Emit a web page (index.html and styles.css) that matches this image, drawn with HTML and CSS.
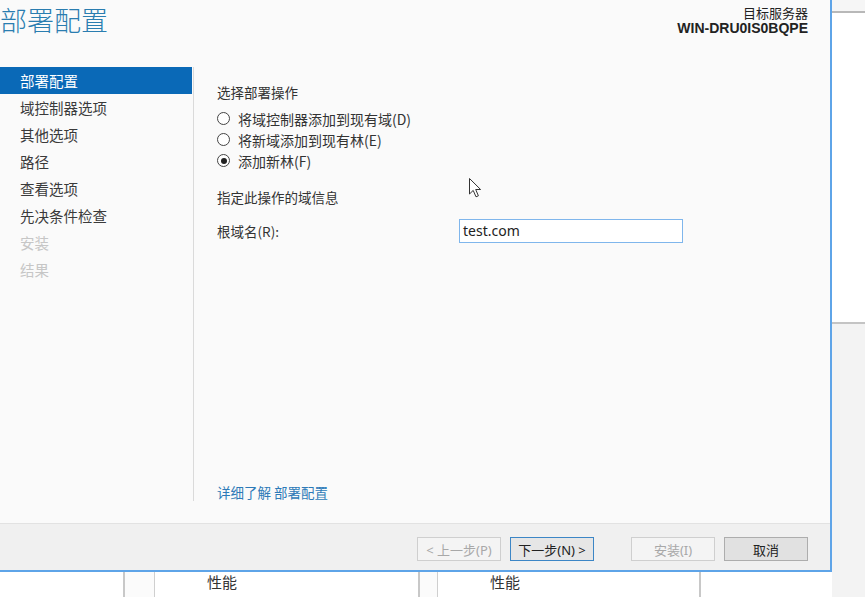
FILE: index.html
```html
<!DOCTYPE html>
<html lang="zh-CN">
  <head>
    <meta charset="UTF-8" />
    <title>部署配置</title>
    <link rel="stylesheet" href="styles.css">
  </head>
  <body>
    <div class="screen">
      <div class="top">
        <div class="dialog">
          <div class="dlgHead">
            <h1 class="title">部署配置</h1>
            <div class="target">
              <div class="targetLabel">目标服务器</div>
              <div class="targetName">WIN-DRU0IS0BQPE</div>
            </div>
          </div>

          <div class="dlgBody">
            <ul class="nav">
              <li class="navItem selected">部署配置</li>
              <li class="navItem">域控制器选项</li>
              <li class="navItem">其他选项</li>
              <li class="navItem">路径</li>
              <li class="navItem">查看选项</li>
              <li class="navItem">先决条件检查</li>
              <li class="navItem disabled">安装</li>
              <li class="navItem disabled">结果</li>
            </ul>

            <div class="pane">
              <div class="paneMain">
                <p class="heading">选择部署操作</p>
                <div class="radios">
                  <label class="radio"><span class="dot"></span>将域控制器添加到现有域(D)</label>
                  <label class="radio"><span class="dot"></span>将新域添加到现有林(E)</label>
                  <label class="radio"><span class="dot checked"></span>添加新林(F)</label>
                </div>
                <p class="heading heading2">指定此操作的域信息</p>
                <div class="field">
                  <span class="fieldLabel">根域名(R):</span>
                  <div class="input">test.com</div>
                </div>
              </div>
              <a class="more" href="#">详细了解 部署配置</a>
            </div>
          </div>

          <div class="dlgFoot">
            <button class="btn" disabled>&lt; 上一步(P)</button>
            <button class="btn focus">下一步(N) &gt;</button>
            <button class="btn install" disabled>安装(I)</button>
            <button class="btn cancel">取消</button>
          </div>
        </div>

        <!-- window behind the dialog, right edge -->
        <div class="behindRight">
          <div class="brTop"></div>
          <div class="brMid"></div>
          <div class="brLow"></div>
        </div>
      </div>

      <!-- window behind the dialog, bottom edge -->
      <div class="behindBottom">
        <div class="seg seg1"></div>
        <div class="seg seg2"></div>
        <div class="seg seg3"><span>性能</span></div>
        <div class="seg seg4"></div>
        <div class="seg seg5"><span>性能</span></div>
        <div class="seg seg6"></div>
        <div class="seg seg7"></div>
      </div>

      <svg class="cursor" width="16" height="22" viewBox="0 0 16 22">
        <path d="M1.5 1.5 L1.5 17 L5.2 13.4 L8 19.8 L10.4 18.8 L7.7 12.5 L12.6 12.5 Z" fill="#fff" stroke="#333" stroke-width="1" stroke-linejoin="round" />
      </svg>
    </div>
  </body>
</html>
```

FILE: styles.css
```css
* {
  box-sizing: border-box;
}
body {
  margin: 0;
  font-family: "Noto Sans", "Noto Sans CJK SC", sans-serif;
  color: #333;
}
.screen {
  position: relative;
  width: 865px;
  height: 597px;
  overflow: hidden;
  background: #fff;
}
.top {
  display: flex;
  height: 572px;
}
.dialog {
  width: 832px;
  height: 572px;
  background: #fafafa;
  border-right: 2px solid #5ea4e8;
  border-bottom: 2px solid #5ea4e8;
  display: flex;
  flex-direction: column;
}

/* header */
.dlgHead {
  height: 67px;
  display: flex;
  justify-content: space-between;
  padding-right: 22px;
}
.title {
  margin: 0;
  font-family: "Noto Sans CJK SC", sans-serif;
  font-size: 27px;
  font-weight: 300;
  line-height: 40px;
  color: #2a7db0;
}
.target {
  text-align: right;
  padding-top: 5px;
  color: #222;
}
.targetLabel {
  font-family: "Noto Sans CJK SC", sans-serif;
  font-size: 13px;
  line-height: 16px;
}
.targetName {
  font-family: "Liberation Sans", sans-serif;
  font-size: 14px;
  line-height: 15px;
  font-weight: bold;
}

/* body */
.dlgBody {
  height: 456px;
  display: flex;
}
.nav {
  list-style: none;
  margin: 0;
  padding: 0;
  width: 193px;
}
.navItem {
  width: 192px;
  height: 27px;
  line-height: 27px;
  padding-left: 20px;
  font-family: "Noto Sans CJK SC", sans-serif;
  font-size: 14.5px;
  color: #3a3a3a;
}
.navItem.selected {
  background: #0a69b7;
  color: #fff;
}
.navItem.disabled {
  color: #c6c6c6;
}
.pane {
  flex: 1;
  height: 434px;
  border-left: 1px solid #dadada;
  padding: 17px 0 0 23px;
  display: flex;
  flex-direction: column;
}
.paneMain {
  flex: 1;
}
.heading {
  margin: 0;
  font-family: "Noto Sans CJK SC", sans-serif;
  font-size: 13.5px;
  line-height: 17px;
  color: #333;
}
.radios {
  margin-top: 7px;
}
.radio {
  display: flex;
  align-items: center;
  height: 21px;
  font-family: "Noto Sans CJK SC", sans-serif;
  font-size: 14px;
  color: #333;
}
.dot {
  position: relative;
  width: 13px;
  height: 13px;
  border: 1px solid #444;
  border-radius: 50%;
  background: #fff;
  margin-right: 8px;
}
.dot.checked::after {
  content: "";
  position: absolute;
  left: 2.5px;
  top: 2.5px;
  width: 6px;
  height: 6px;
  border-radius: 50%;
  background: #222;
}
.heading2 {
  margin-top: 18px;
}
.field {
  display: flex;
  align-items: center;
  margin-top: 13px;
}
.fieldLabel {
  width: 242px;
  font-family: "Noto Sans CJK SC", sans-serif;
  font-size: 13.5px;
  color: #333;
}
.input {
  width: 224px;
  height: 24px;
  border: 1px solid #7fb6ec;
  background: #fff;
  padding-left: 3px;
  font-size: 14px;
  line-height: 22px;
  color: #222;
}
.more {
  font-family: "Noto Sans CJK SC", sans-serif;
  font-size: 13.5px;
  line-height: 17px;
  color: #2d7ab8;
  text-decoration: none;
}

/* footer */
.dlgFoot {
  flex: 1;
  background: #f0f0f0;
  border-top: 1px solid #e2e2e2;
  display: flex;
  justify-content: flex-end;
  align-items: flex-start;
  padding: 13px 22px 0 0;
  gap: 9px;
}
.btn {
  width: 84px;
  height: 24px;
  border: 1px solid #adadad;
  background: #e1e1e1;
  font-family: "Noto Sans", "Noto Sans CJK SC", sans-serif;
  font-size: 13px;
  color: #222;
  padding: 0;
}
.btn:disabled {
  border-color: #cfcfcf;
  background: #f4f4f4;
  color: #a8a8a8;
}
.btn.focus {
  border-color: #3c86c6;
  background: #e6e6e6;
}
.btn.install {
  margin-left: 28px;
}

/* background window */
.behindRight {
  flex: 1;
  display: flex;
  flex-direction: column;
}
.brTop {
  height: 13px;
  background: #f6f6f6;
  border-bottom: 2px solid #b8b8b8;
}
.brMid {
  height: 311px;
  background: #fff;
  border-bottom: 2px solid #c4c4c4;
}
.brLow {
  flex: 1;
  background: #f3f3f3;
}
.behindBottom {
  display: flex;
  height: 25px;
  background: #fff;
}
.seg {
  height: 25px;
}
.seg1 {
  width: 123px;
}
.seg2 {
  width: 32px;
  border-left: 2px solid #c8c8c8;
  border-right: 1px solid #cfcfcf;
  background: #fbfbfb;
}
.seg3, .seg5 {
  width: 263px;
  font-family: "Noto Sans CJK SC", sans-serif;
  font-size: 15px;
  line-height: 19px;
  color: #333;
}
.seg3 {
  padding-left: 52px;
}
.seg4 {
  width: 20px;
  border-left: 2px solid #c8c8c8;
  border-right: 1px solid #cfcfcf;
  background: #fbfbfb;
}
.seg5 {
  padding-left: 52px;
  border-right: 2px solid #c8c8c8;
}
.seg6 {
  width: 131px;
}
.seg7 {
  flex: 1;
  background: #f3f3f3;
}
.cursor {
  position: absolute;
  left: 468px;
  top: 177px;
}
```
